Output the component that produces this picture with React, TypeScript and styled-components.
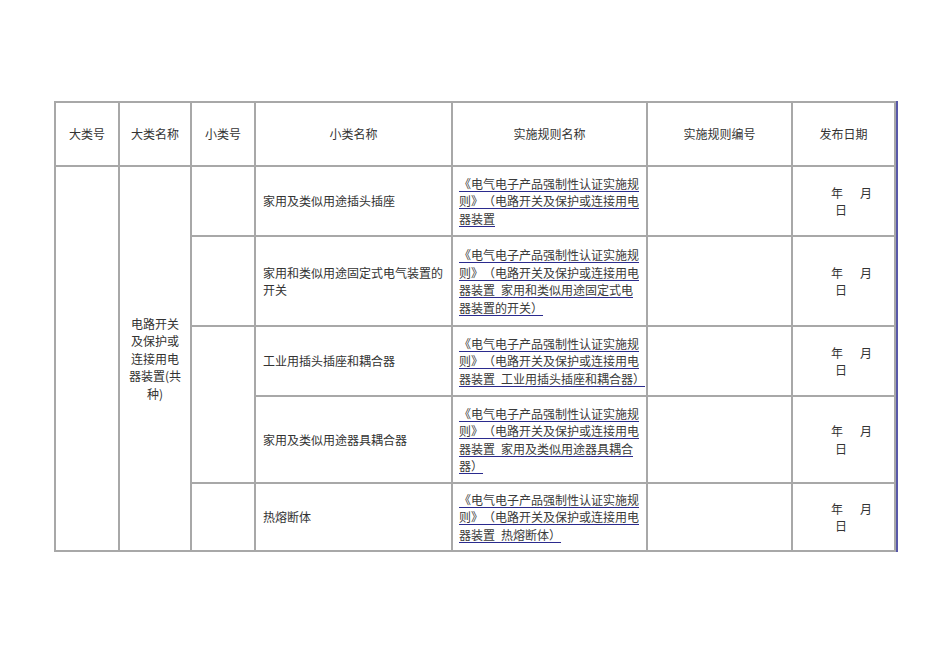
import React from "react";
import styled, { createGlobalStyle } from "styled-components";

const GlobalStyle = createGlobalStyle`
  html, body {
    margin: 0;
    padding: 0;
    background: #ffffff;
  }
  body {
    font-family: "Noto Sans CJK SC", "Noto Sans", sans-serif;
  }
`;

const Page = styled.div`
  width: 950px;
  height: 672px;
  box-sizing: border-box;
  padding: 101px 0 0 54px;
`;

const Grid = styled.div`
  display: grid;
  grid-template-columns: 64px 72px 64px 197px 195px 145px 103px;
  grid-template-rows: 64px 70px 90px 70px 87px 68px;
  width: max-content;
  border-top: 2px solid #a8a8a8;
  border-left: 2px solid #a8a8a8;
  box-shadow: 2px 0 0 #5858a8;
  font-size: 12px;
  line-height: 17.5px;
  color: #333;
  text-spacing-trim: space-all;
`;

const Cell = styled.div<{ $align?: "center" | "start"; $span?: number }>`
  box-sizing: border-box;
  border-right: 2px solid #a8a8a8;
  border-bottom: 2px solid #a8a8a8;
  display: flex;
  align-items: center;
  justify-content: ${(p) => (p.$align === "center" ? "center" : "flex-start")};
  text-align: ${(p) => (p.$align === "center" ? "center" : "left")};
  padding: 0 7px;
  grid-row: ${(p) => (p.$span ? `span ${p.$span}` : "auto")};
  min-width: 0;
`;

const LinkCell = styled(Cell)`
  padding: 0 5px 0 6px;
`;

const NameLines = styled.div`
  white-space: nowrap;
  text-align: center;
`;

const RuleLink = styled.a`
  color: #3a3a3a;
  text-decoration: underline;
  text-decoration-color: #2b2b8e;
  text-decoration-thickness: 1px;
  text-underline-offset: 2px;
  white-space: nowrap;
  cursor: pointer;
`;

const DateCell = styled(Cell)`
  flex-direction: column;
  align-items: flex-start;
  justify-content: center;
  padding: 0 0 0 38px;
`;

const DateLine = styled.div<{ $indent?: number }>`
  display: flex;
  white-space: nowrap;
  padding-left: ${(p) => p.$indent ?? 0}px;
`;

const Spacer = styled.span`
  display: inline-block;
  width: 17px;
`;

type Row = { name: string; link: string[] };

const rows: Row[] = [
  {
    name: "家用及类似用途插头插座",
    link: ["《电气电子产品强制性认证实施规", "则》（电路开关及保护或连接用电", "器装置"],
  },
  {
    name: "家用和类似用途固定式电气装置的开关",
    link: [
      "《电气电子产品强制性认证实施规",
      "则》（电路开关及保护或连接用电",
      "器装置\u2002家用和类似用途固定式电",
      "器装置的开关）",
    ],
  },
  {
    name: "工业用插头插座和耦合器",
    link: [
      "《电气电子产品强制性认证实施规",
      "则》（电路开关及保护或连接用电",
      "器装置\u2002工业用插头插座和耦合器）",
    ],
  },
  {
    name: "家用及类似用途器具耦合器",
    link: [
      "《电气电子产品强制性认证实施规",
      "则》（电路开关及保护或连接用电",
      "器装置\u2002家用及类似用途器具耦合",
      "器）",
    ],
  },
  {
    name: "热熔断体",
    link: [
      "《电气电子产品强制性认证实施规",
      "则》（电路开关及保护或连接用电",
      "器装置\u2002热熔断体）",
    ],
  },
];

const headers = ["大类号", "大类名称", "小类号", "小类名称", "实施规则名称", "实施规则编号", "发布日期"];

const bigName = ["电路开关", "及保护或", "连接用电", "器装置(共", "种)"];

function DateText() {
  return (
    <>
      <DateLine>
        <span>年</span>
        <Spacer />
        <span>月</span>
      </DateLine>
      <DateLine $indent={4}>日</DateLine>
    </>
  );
}

export default function App() {
  return (
    <Page>
      <GlobalStyle />
      <Grid>
        {headers.map((h) => (
          <Cell key={h} $align="center">
            {h}
          </Cell>
        ))}
        {rows.map((r, i) => (
          <React.Fragment key={i}>
            {i === 0 && (
              <>
                <Cell $span={5} />
                <Cell $span={5} $align="center">
                  <NameLines>
                    {bigName.map((l, k) => (
                      <React.Fragment key={k}>
                        {l}
                        {k < bigName.length - 1 && <br />}
                      </React.Fragment>
                    ))}
                  </NameLines>
                </Cell>
              </>
            )}
            {i === 2 && <Cell $span={2} />}
            {i !== 2 && i !== 3 && <Cell />}
            <Cell>{r.name}</Cell>
            <LinkCell>
              <div>
                <RuleLink>
                  {r.link.map((l, k) => (
                    <React.Fragment key={k}>
                      {l}
                      {k < r.link.length - 1 && <br />}
                    </React.Fragment>
                  ))}
                </RuleLink>
              </div>
            </LinkCell>
            <Cell />
            <DateCell>
              <DateText />
            </DateCell>
          </React.Fragment>
        ))}
      </Grid>
    </Page>
  );
}
